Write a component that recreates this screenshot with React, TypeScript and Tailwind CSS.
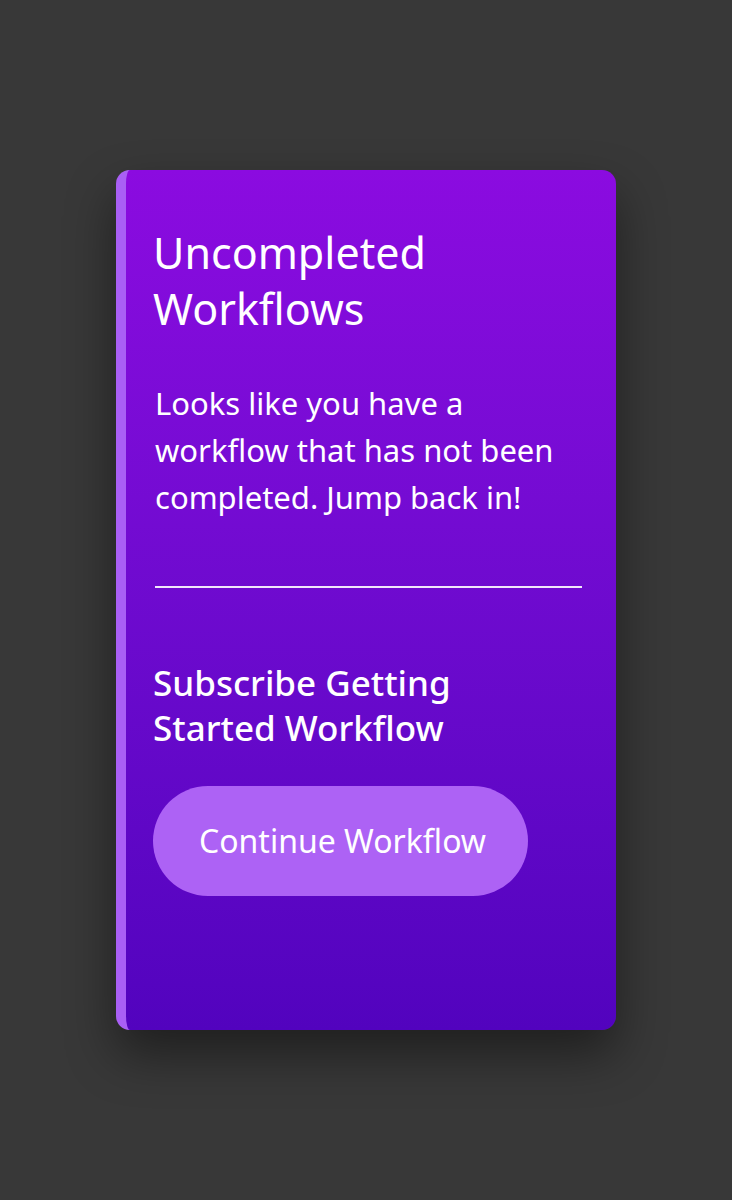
import React from 'react';

const font = { fontFamily: '"Noto Sans", Lato, sans-serif' };

export default function App() {
  return (
    <div className="min-h-[1200px] w-full bg-[#383838] flex items-center justify-center" style={font}>
      <div className="w-[500px] h-[860px] rounded-[14px] border-l-[10px] border-[#a95ff5] bg-gradient-to-b from-[#8b0be0] to-[#5203be] shadow-[0_24px_50px_rgba(0,0,0,0.45)] pt-[55px] pl-[27px] pr-[33px] flex flex-col items-start text-white">
        <h2 className="text-[43px] leading-[56px] font-normal">
          Uncompleted
          <br />
          Workflows
        </h2>
        <p className="mt-[43px] pl-[2px] text-[31px] leading-[47px] max-w-[424px]">
          Looks like you have a workflow that has not been completed. Jump back in!
        </p>
        <div className="mt-[65px] ml-[2px] h-[2px] w-[427px] bg-white/90" />
        <h3 className="mt-[72px] text-[35px] leading-[45px] font-medium">
          Subscribe Getting
          <br />
          Started Workflow
        </h3>
        <button className="mt-[36px] h-[110px] pl-[46px] pr-[42px] rounded-full bg-[#ad62f5] text-[32px] text-white">
          Continue Workflow
        </button>
      </div>
    </div>
  );
}
